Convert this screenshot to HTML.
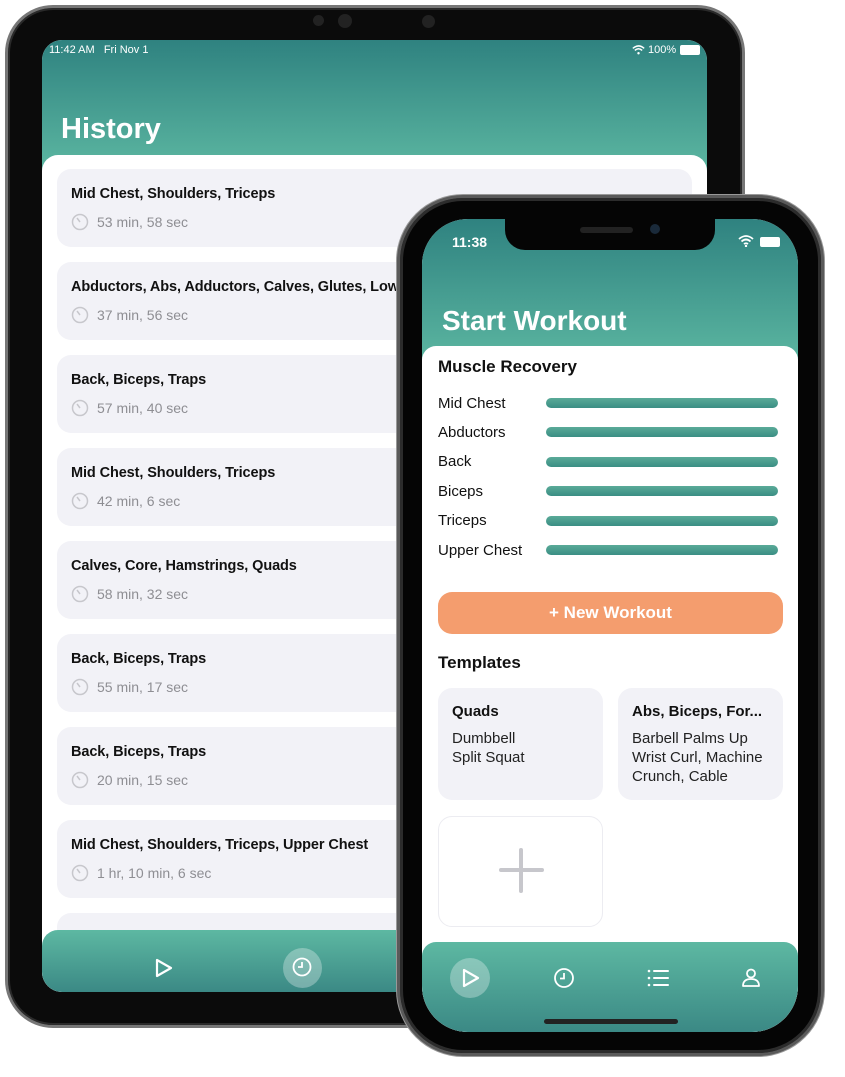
<!DOCTYPE html>
<html><head><meta charset="utf-8"><style>
*{margin:0;padding:0;box-sizing:border-box}
body{width:845px;height:1077px;background:#fff;position:relative;overflow:hidden;font-family:"Liberation Sans",sans-serif}
.abs{position:absolute}
.ipad{left:5px;top:5px;width:740px;height:1023px;border-radius:48px;background:#0b0b0b;border:3px solid #777;box-shadow:inset 0 0 0 2px #2a2a2a}
.ipscr{left:42px;top:40px;width:665px;height:952px;border-radius:20px;overflow:hidden;background:#fff}
.hdr{left:0;top:0;width:100%;height:135px;background:linear-gradient(#2f8280,#5db8a2)}
.card{position:absolute;left:15px;width:635px;height:78px;background:#f2f2f7;border-radius:14px}
.card .t{position:absolute;left:14px;top:17px;font-size:14.5px;font-weight:bold;color:#111;white-space:nowrap;letter-spacing:-0.1px}
.card .d{position:absolute;left:40px;top:45px;font-size:14px;color:#8e8e93}
.card svg{position:absolute;left:14px;top:44px}
.tab{background:linear-gradient(#5db8a2,#3b8985)}
.iph{left:397px;top:195px;width:427px;height:861px;border-radius:66px;background:#050505;border:3px solid #5a5a5a;box-shadow:inset 0 0 0 3px #2c2c2c,0 0 0 1px #999}
.phscr{left:422px;top:219px;width:376px;height:813px;border-radius:46px;overflow:hidden;background:#fff}
.row{position:absolute;left:16px;font-size:15px;color:#111}
.bar{position:absolute;left:124px;width:232px;height:10px;border-radius:5px;background:linear-gradient(#5aaa98,#3a8e84)}
.tc{position:absolute;top:469px;width:165px;height:112px;background:#f2f2f7;border-radius:14px;padding:15px 14px}
.tc b{display:block;font-size:15px;color:#111;margin-bottom:9px}
.tc span{font-size:15px;color:#222;line-height:19px;display:block}
</style></head><body>

<div class="abs ipad"></div>
<div class="abs" style="left:313px;top:15px;width:11px;height:11px;border-radius:50%;background:#222"></div>
<div class="abs" style="left:338px;top:14px;width:14px;height:14px;border-radius:50%;background:#222"></div>
<div class="abs" style="left:422px;top:15px;width:13px;height:13px;border-radius:50%;background:#222"></div>
<div class="abs ipscr">
  <div class="abs hdr"></div>
  <div class="abs" style="left:7px;top:4px;font-size:11px;color:#fff">11:42 AM&nbsp;&nbsp; Fri Nov 1</div>
  <svg class="abs" style="left:590px;top:5px" width="13" height="10" viewBox="0 0 16 12"><path d="M1 4 Q8 -2 15 4 M3.5 6.5 Q8 2.5 12.5 6.5" fill="none" stroke="#fff" stroke-width="1.8"/><circle cx="8" cy="10" r="1.5" fill="#fff"/></svg>
  <div class="abs" style="left:606px;top:4px;font-size:11px;color:#fff">100%</div>
  <div class="abs" style="left:638px;top:5px;width:20px;height:10px;border-radius:2px;background:#fff"></div>
  <div class="abs" style="left:19px;top:73px;font-size:29px;font-weight:bold;color:#fff">History</div>
  <div class="abs" style="left:0;top:115px;width:100%;height:840px;background:#fff;border-radius:16px 16px 0 0"></div>
  <div class="abs" style="left:576px;top:140px;font-size:20px;color:#f49d6e">MON</div>
  <div class="card" style="top:129px"><div class="t">Mid Chest, Shoulders, Triceps</div><svg width="18" height="18" viewBox="0 0 18 18"><circle cx="9" cy="9" r="7.5" fill="none" stroke="#c7c7cc" stroke-width="1.5"/><path d="M9 9 L6 5" stroke="#c7c7cc" stroke-width="1.5"/></svg><div class="d">53 min, 58 sec</div></div>
  <div class="card" style="top:222px"><div class="t">Abductors, Abs, Adductors, Calves, Glutes, Lower Back</div><svg width="18" height="18" viewBox="0 0 18 18"><circle cx="9" cy="9" r="7.5" fill="none" stroke="#c7c7cc" stroke-width="1.5"/><path d="M9 9 L6 5" stroke="#c7c7cc" stroke-width="1.5"/></svg><div class="d">37 min, 56 sec</div></div>
  <div class="card" style="top:315px"><div class="t">Back, Biceps, Traps</div><svg width="18" height="18" viewBox="0 0 18 18"><circle cx="9" cy="9" r="7.5" fill="none" stroke="#c7c7cc" stroke-width="1.5"/><path d="M9 9 L6 5" stroke="#c7c7cc" stroke-width="1.5"/></svg><div class="d">57 min, 40 sec</div></div>
  <div class="card" style="top:408px"><div class="t">Mid Chest, Shoulders, Triceps</div><svg width="18" height="18" viewBox="0 0 18 18"><circle cx="9" cy="9" r="7.5" fill="none" stroke="#c7c7cc" stroke-width="1.5"/><path d="M9 9 L6 5" stroke="#c7c7cc" stroke-width="1.5"/></svg><div class="d">42 min, 6 sec</div></div>
  <div class="card" style="top:501px"><div class="t">Calves, Core, Hamstrings, Quads</div><svg width="18" height="18" viewBox="0 0 18 18"><circle cx="9" cy="9" r="7.5" fill="none" stroke="#c7c7cc" stroke-width="1.5"/><path d="M9 9 L6 5" stroke="#c7c7cc" stroke-width="1.5"/></svg><div class="d">58 min, 32 sec</div></div>
  <div class="card" style="top:594px"><div class="t">Back, Biceps, Traps</div><svg width="18" height="18" viewBox="0 0 18 18"><circle cx="9" cy="9" r="7.5" fill="none" stroke="#c7c7cc" stroke-width="1.5"/><path d="M9 9 L6 5" stroke="#c7c7cc" stroke-width="1.5"/></svg><div class="d">55 min, 17 sec</div></div>
  <div class="card" style="top:687px"><div class="t">Back, Biceps, Traps</div><svg width="18" height="18" viewBox="0 0 18 18"><circle cx="9" cy="9" r="7.5" fill="none" stroke="#c7c7cc" stroke-width="1.5"/><path d="M9 9 L6 5" stroke="#c7c7cc" stroke-width="1.5"/></svg><div class="d">20 min, 15 sec</div></div>
  <div class="card" style="top:780px"><div class="t">Mid Chest, Shoulders, Triceps, Upper Chest</div><svg width="18" height="18" viewBox="0 0 18 18"><circle cx="9" cy="9" r="7.5" fill="none" stroke="#c7c7cc" stroke-width="1.5"/><path d="M9 9 L6 5" stroke="#c7c7cc" stroke-width="1.5"/></svg><div class="d">1 hr, 10 min, 6 sec</div></div>
  <div class="card" style="top:873px"></div>
  <div class="abs tab" style="left:0;top:890px;width:100%;height:62px;border-radius:16px 16px 0 0"></div>
  <svg class="abs" style="left:112px;top:917px" width="20" height="22" viewBox="0 0 20 22"><path d="M3 3 L17 11 L3 19 Z" fill="none" stroke="#fff" stroke-width="2.2" stroke-linejoin="round"/></svg>
  <div class="abs" style="left:241px;top:908px;width:39px;height:40px;border-radius:50%;background:rgba(255,255,255,.3)"></div>
  <svg class="abs" style="left:249px;top:916px" width="22" height="22" viewBox="0 0 22 22"><circle cx="11" cy="11" r="8.5" fill="none" stroke="#fff" stroke-width="1.8"/><path d="M11 6 V11 H7" fill="none" stroke="#fff" stroke-width="1.8"/></svg>
</div>

<div class="abs iph"></div>
<div class="abs phscr">
  <div class="abs hdr" style="height:150px"></div>
  <div class="abs" style="left:83px;top:0;width:210px;height:31px;background:#050505;border-radius:0 0 20px 20px"></div>
  <div class="abs" style="left:158px;top:8px;width:53px;height:6px;border-radius:3px;background:#222"></div>
  <div class="abs" style="left:228px;top:5px;width:10px;height:10px;border-radius:50%;background:#1a2a3a"></div>
  <div class="abs" style="left:30px;top:15px;font-size:14px;font-weight:bold;color:#fff">11:38</div>
  <svg class="abs" style="left:316px;top:16px" width="16" height="12" viewBox="0 0 16 12"><path d="M1 4 Q8 -2 15 4 M3.5 6.5 Q8 2.5 12.5 6.5 M6 9 Q8 7.5 10 9" fill="none" stroke="#fff" stroke-width="1.8"/><circle cx="8" cy="11" r="1.2" fill="#fff"/></svg>
  <div class="abs" style="left:338px;top:18px;width:20px;height:10px;border-radius:2px;background:#fff"></div>
  <div class="abs" style="left:20px;top:86px;font-size:28px;font-weight:bold;color:#fff">Start Workout</div>
  <div class="abs" style="left:0;top:127px;width:100%;height:700px;background:#fff;border-radius:14px 14px 0 0"></div>
  <div class="abs" style="left:16px;top:138px;font-size:17px;font-weight:bold;color:#111">Muscle Recovery</div>
  <div class="row" style="top:176px">Mid Chest</div><div class="bar" style="top:179px"></div>
  <div class="row" style="top:205px">Abductors</div><div class="bar" style="top:208px"></div>
  <div class="row" style="top:234px">Back</div><div class="bar" style="top:238px"></div>
  <div class="row" style="top:264px">Biceps</div><div class="bar" style="top:267px"></div>
  <div class="row" style="top:293px">Triceps</div><div class="bar" style="top:297px"></div>
  <div class="row" style="top:323px">Upper Chest</div><div class="bar" style="top:326px"></div>
  <div class="abs" style="left:16px;top:373px;width:345px;height:42px;border-radius:14px;background:#f49d6e;color:#fff;font-size:17px;font-weight:bold;text-align:center;line-height:42px">+ New Workout</div>
  <div class="abs" style="left:16px;top:434px;font-size:17px;font-weight:bold;color:#111">Templates</div>
  <div class="tc" style="left:16px"><b>Quads</b><span>Dumbbell<br>Split Squat</span></div>
  <div class="tc" style="left:196px"><b>Abs, Biceps, For...</b><span>Barbell Palms Up<br>Wrist Curl, Machine<br>Crunch, Cable</span></div>
  <div class="abs" style="left:16px;top:597px;width:165px;height:111px;border:1.5px solid #ececf1;border-radius:14px"></div>
  <div class="abs" style="left:97px;top:629px;width:4px;height:45px;border-radius:2px;background:#c7c7cc"></div>
  <div class="abs" style="left:77px;top:649px;width:45px;height:4px;border-radius:2px;background:#c7c7cc"></div>
  <div class="abs tab" style="left:0;top:723px;width:100%;height:90px;border-radius:14px 14px 0 0"></div>
  <div class="abs" style="left:28px;top:739px;width:40px;height:40px;border-radius:50%;background:rgba(255,255,255,.3)"></div>
  <svg class="abs" style="left:38px;top:748px" width="22" height="22" viewBox="0 0 22 22"><path d="M4 3 L18 11 L4 19 Z" fill="none" stroke="#fff" stroke-width="2.2" stroke-linejoin="round"/></svg>
  <svg class="abs" style="left:131px;top:748px" width="22" height="22" viewBox="0 0 22 22"><circle cx="11" cy="11" r="9" fill="none" stroke="#fff" stroke-width="1.8"/><path d="M11 6 V11.5 H7" fill="none" stroke="#fff" stroke-width="1.8"/></svg>
  <svg class="abs" style="left:225px;top:750px" width="22" height="18" viewBox="0 0 22 18"><path d="M7 2 H21 M7 9 H21 M7 16 H21" stroke="#fff" stroke-width="2" stroke-linecap="round"/><circle cx="2" cy="2" r="1.3" fill="#fff"/><circle cx="2" cy="9" r="1.3" fill="#fff"/><circle cx="2" cy="16" r="1.3" fill="#fff"/></svg>
  <svg class="abs" style="left:318px;top:748px" width="22" height="22" viewBox="0 0 22 22"><circle cx="11" cy="6.5" r="4" fill="none" stroke="#fff" stroke-width="1.8"/><path d="M3 19 Q3 12 11 12 Q19 12 19 19 Z" fill="none" stroke="#fff" stroke-width="1.8" stroke-linejoin="round"/></svg>
  <div class="abs" style="left:122px;top:800px;width:134px;height:5px;border-radius:3px;background:#222"></div>
</div>
</body></html>
